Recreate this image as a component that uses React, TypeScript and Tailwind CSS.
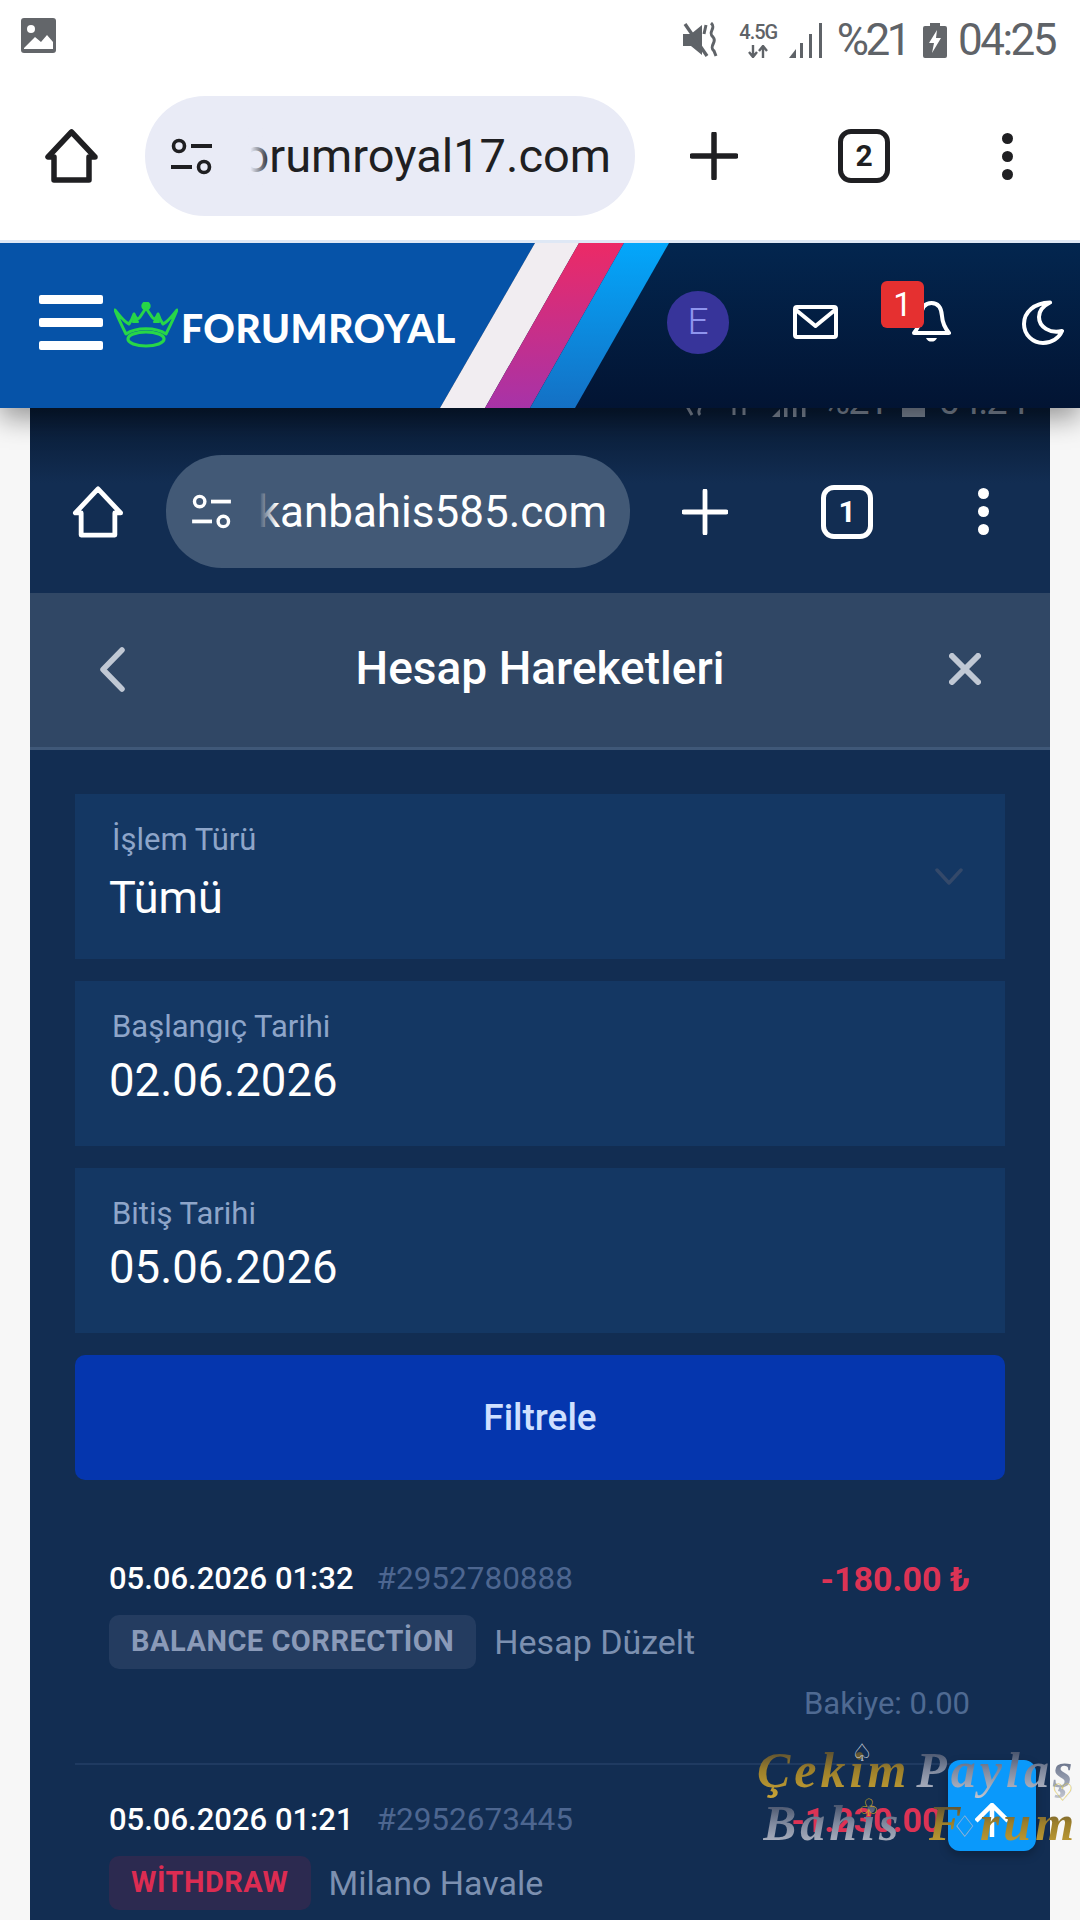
import React from "react";

const Dots = ({ className }: { className: string }) => (
  <div className={`flex flex-col items-center gap-[7px] ${className}`}>
    <div className="h-[11px] w-[11px] rounded-full bg-current" />
    <div className="h-[11px] w-[11px] rounded-full bg-current" />
    <div className="h-[11px] w-[11px] rounded-full bg-current" />
  </div>
);

const HomeIcon = ({ className, sw }: { className: string; sw: number }) => (
  <svg className={className} viewBox="0 0 53 54" fill="none" stroke="currentColor" strokeWidth={sw} strokeLinejoin="round" strokeLinecap="round">
    <path d="M26.5 3 L3 28 H9 V51 H44 V28 H50 Z" />
  </svg>
);

const SlidersIcon = ({ className }: { className: string }) => (
  <svg className={className} viewBox="0 0 43 37" fill="none" stroke="currentColor" strokeWidth={3.6}>
    <circle cx="9" cy="8" r="5.5" />
    <path d="M21 8 H42" strokeWidth={4} />
    <path d="M1 29 H22" strokeWidth={4} />
    <circle cx="34" cy="29" r="5.5" />
  </svg>
);

const PlusIcon = ({ className, sw }: { className: string; sw: number }) => (
  <svg className={className} viewBox="0 0 48 48" fill="none" stroke="currentColor" strokeWidth={sw} strokeLinecap="round">
    <path d="M24 2 V46 M2 24 H46" />
  </svg>
);

const TabCount = ({ n, className }: { n: string; className: string }) => (
  <div className={`flex h-[54px] w-[52px] items-center justify-center rounded-[13px] border-[5px] border-current text-[30px] font-bold leading-none ${className}`}>
    {n}
  </div>
);

const Crown = () => (
  <svg className="h-[46px] w-[64px]" viewBox="0 0 64 46" fill="none" stroke="#27d648" strokeWidth={3} strokeLinecap="round" strokeLinejoin="round">
    <path d="M1 8 C6 14 10 20 15 22 C18 18 19 15 20 12 C22 17 24 18 26 15 L32 6 L38 15 C40 18 42 17 44 12 C45 15 46 18 49 22 C54 20 58 14 63 8 C60 16 56 24 52 32 C42 25 22 25 12 32 C8 24 4 16 1 8 Z" />
    <circle cx="32" cy="4" r="3.2" fill="#27d648" />
    <path d="M21 14 L19 20 L24 20 Z M43 14 L45 20 L40 20 Z" fill="#27d648" strokeWidth={2} />
    <ellipse cx="32" cy="37" rx="18" ry="7" strokeWidth={3.2} />
  </svg>
);

const Field = ({ label, value, size }: { label: string; value: string; size: string }) => (
  <div className="relative h-[165px] bg-[#143763] pl-[34px]">
    <div className="pl-[3px] pt-[28px] text-[31px] leading-[36px] text-[#8ea5c9]">{label}</div>
    <div className={`text-white ${size}`}>{value}</div>
  </div>
);

const Tx = ({ date, id, amount, tag, tagClass, name, balance }: { date: string; id: string; amount: string; tag: string; tagClass: string; name: string; balance?: string }) => (
  <div className="pl-[34px] pr-[35px]">
    <div className="flex h-[40px] items-center justify-between">
      <div className="flex items-center gap-[23px]">
        <span className="text-[31px] font-medium text-white">{date}</span>
        <span className="text-[31.5px] text-[#4d6690]">{id}</span>
      </div>
      <span className="text-[34px] font-bold text-[#dc3355]">{amount}</span>
    </div>
    <div className="mt-[16px] flex items-center gap-[18px]">
      <div className={`flex h-[54px] items-center rounded-[10px] px-[22px] text-[29px] font-bold tracking-[0.5px] ${tagClass}`}>{tag}</div>
      <span className="text-[34px] text-[#7c90b0]">{name}</span>
    </div>
    {balance && <div className="mt-[15px] flex h-[40px] items-center justify-end text-[31px] text-[#4f6a92]">{balance}</div>}
  </div>
);

export default function App() {
  return (
    <div className="relative flex h-[1920px] w-[1080px] flex-col overflow-hidden bg-[#f7f7f7] font-['Roboto',sans-serif]">
      {/* Phone status bar */}
      <div className="relative z-20 flex h-[96px] items-start justify-between bg-white pl-[21px] pr-[25px] pt-[18px] text-[#5f6368]">
        <svg className="h-[35px] w-[35px]" viewBox="0 0 35 35">
          <rect width="35" height="35" rx="3" fill="#63666a" />
          <circle cx="10" cy="11" r="4" fill="#fff" />
          <path d="M3 30 L14 19 L20 24 L26 17 L32 24 V31 H3 Z" fill="#fff" />
        </svg>
        <div className="flex items-center">
          <svg className="h-[36px] w-[38px]" viewBox="0 0 38 36" fill="none" stroke="currentColor">
            <path d="M1 12 H9 L20 3 V33 L9 24 H1 Z" fill="currentColor" stroke="none" />
            <path d="M3 2 L25 34" strokeWidth={3.4} />
            <path d="M24 3 L22 12 M29 1 C35 6 25 10 31 15 C36 20 26 24 32 29 L34 34" strokeWidth={3} />
          </svg>
          <div className="ml-[19px] flex w-[39px] flex-col items-center leading-none">
            <span className="text-[20px] font-medium tracking-[-1px]">4.5G</span>
            <svg className="mt-[3px] h-[13px] w-[22px]" viewBox="0 0 22 13" fill="none" stroke="currentColor" strokeWidth={2.4}>
              <path d="M6 0 V11 M2 7 L6 12 L10 7 M16 13 V2 M12 6 L16 1 L20 6" />
            </svg>
          </div>
          <svg className="ml-[11px] h-[35px] w-[34px]" viewBox="0 0 34 35" fill="currentColor">
            <path d="M0 35 L7 26 V35 Z" />
            <rect x="11" y="20" width="3" height="15" />
            <rect x="20" y="11" width="3" height="24" />
            <rect x="30" y="0" width="3" height="35" />
          </svg>
          <span className="ml-[14px] text-[44px] leading-none tracking-[-3.5px]">%21</span>
          <svg className="ml-[15px] h-[35px] w-[24px]" viewBox="0 0 24 35">
            <path d="M7 0 H17 V3 H22 A2 2 0 0 1 24 5 V33 A2 2 0 0 1 22 35 H2 A2 2 0 0 1 0 33 V5 A2 2 0 0 1 2 3 H7 Z" fill="#63666a" />
            <path d="M14 7 L6 20 H11 L9 30 L18 15 H13 Z" fill="#fff" />
          </svg>
          <span className="ml-[11px] text-[44px] leading-none tracking-[-2.5px]">04:25</span>
        </div>
      </div>

      {/* Browser toolbar */}
      <div className="relative z-20 h-[147px] border-b-[3px] border-[#dfe8f5] bg-white pl-[45px] text-[#1f1f22]">
        <div className="flex h-[120px] items-center">
          <HomeIcon className="h-[54px] w-[53px]" sw={5.5} />
          <div className="ml-[47px] flex h-[120px] w-[490px] items-center rounded-[60px] bg-[#e9ebf6] pl-[25px]">
            <SlidersIcon className="h-[37px] w-[43px] shrink-0" />
            <div className="relative ml-[29px] flex w-[369px] justify-end overflow-hidden">
              <span className="text-[47px] leading-[60px]">forumroyal17.com</span>
              <div className="absolute inset-y-0 left-0 w-[28px] bg-gradient-to-r from-[#e9ebf6] from-30% to-transparent" />
            </div>
          </div>
          <PlusIcon className="ml-[55px] h-[48px] w-[48px]" sw={5.5} />
          <TabCount n="2" className="ml-[100px]" />
          <Dots className="ml-[112px]" />
        </div>
      </div>

      {/* Site header */}
      <div className="relative z-10 flex h-[165px] items-center bg-gradient-to-b from-[#03264f] to-[#021433] pb-[7px] pl-[39px] shadow-[0_10px_26px_rgba(0,0,0,0.4)]">
        <svg className="absolute inset-0 h-[165px] w-[680px]" viewBox="0 0 680 165">
          <defs>
            <linearGradient id="pink" x1="0" y1="0" x2="0" y2="1">
              <stop offset="0" stopColor="#ec2a66" />
              <stop offset="1" stopColor="#a733a8" />
            </linearGradient>
            <linearGradient id="sky" x1="0" y1="0" x2="0" y2="1">
              <stop offset="0" stopColor="#03a7fb" />
              <stop offset="1" stopColor="#1470c4" />
            </linearGradient>
          </defs>
          <polygon points="0,0 535,0 440,165 0,165" fill="#0653a8" />
          <polygon points="535,0 579,0 485,165 440,165" fill="#f1edf1" />
          <polygon points="579,0 624,0 530,165 485,165" fill="url(#pink)" />
          <polygon points="624,0 669,0 575,165 530,165" fill="url(#sky)" />
        </svg>
        <div className="relative flex w-[64px] flex-col gap-[14px]">
          <div className="h-[9px] rounded-[2px] bg-white" />
          <div className="h-[9px] rounded-[2px] bg-white" />
          <div className="h-[9px] rounded-[2px] bg-white" />
        </div>
        <div className="relative ml-[11px] mt-[6px]">
          <Crown />
        </div>
        <span className="relative ml-[3px] mt-[13px] font-['Lato',sans-serif] text-[39px] font-black leading-none tracking-[0.5px] text-white">FORUMROYAL</span>
        <div className="relative ml-[211px] flex h-[63px] w-[62px] items-center justify-center rounded-full bg-[#37349a] text-[37px] font-light text-[#8f94ee]">E</div>
        <svg className="relative ml-[64px] h-[34px] w-[45px]" viewBox="0 0 45 34" fill="none" stroke="#fff" strokeWidth={4} strokeLinejoin="round" strokeLinecap="round">
          <rect x="2" y="2" width="41" height="30" rx="2" />
          <path d="M3 5 L22.5 21 L42 5" />
        </svg>
        <svg className="relative ml-[74px] h-[45px] w-[39px]" viewBox="0 0 39 45" fill="none" stroke="#fff" strokeWidth={4} strokeLinejoin="round">
          <path d="M19.5 3 C27 3 29.5 9 30 16 C30.5 24 33 28 37 33 H2 C6 28 8.5 24 9 16 C9.5 9 12 3 19.5 3 Z" />
          <path d="M14 38 A6 6 0 0 0 25 38 Z" fill="#fff" stroke="none" />
        </svg>
        <svg className="relative ml-[71px] h-[45px] w-[42px]" viewBox="0 0 42 45" fill="none" stroke="#fff" strokeWidth={4} strokeLinejoin="round" strokeLinecap="round">
          <path d="M28 2.5 C12 3 2 12 2 24 C2 35 11 43 21 43 C30 43 37 38 40 31 C28 34 17 27 17 17 C17 11 21 6 28 2.5 Z" />
        </svg>
        {/* Notification count */}
        <div className="absolute left-[881px] top-[38px] flex h-[47px] w-[43px] items-center justify-center rounded-[6px] bg-[#e53030] text-[33px] leading-none text-white">1</div>
      </div>

      {/* Recorded screen inside the page */}
      <div className="mx-[30px] flex-1 overflow-hidden bg-[#122d52] bg-[linear-gradient(to_bottom,#081a33,#122d52_75px)]">
        <div className="flex h-[47px] items-start justify-end overflow-hidden pr-[24px] text-[#7a8494]">
          <div className="mt-[-26px] flex items-center">
            <svg className="h-[32px] w-[30px]" viewBox="0 0 30 32" fill="none" stroke="currentColor" strokeWidth={3}>
              <path d="M2 2 L18 30 M24 2 C28 8 20 12 25 18 C29 22 22 26 26 30" />
            </svg>
            <svg className="ml-[24px] h-[32px] w-[22px]" viewBox="0 0 22 32" fill="none" stroke="currentColor" strokeWidth={3}>
              <path d="M6 14 V30 M16 30 V14" />
            </svg>
            <svg className="ml-[22px] h-[32px] w-[34px]" viewBox="0 0 34 32" fill="currentColor">
              <path d="M0 32 L8 24 V32 Z" />
              <rect x="12" y="0" width="3.5" height="32" />
              <rect x="21" y="0" width="3.5" height="32" />
              <rect x="30" y="0" width="3.5" height="32" />
            </svg>
            <span className="ml-[16px] text-[38px] leading-none tracking-[-2px]">%21</span>
            <div className="ml-[15px] h-[32px] w-[23px] bg-current" />
            <span className="ml-[14px] text-[38px] leading-none tracking-[-1.5px]">04:24</span>
          </div>
        </div>

        <div className="flex h-[138px] items-start pl-[42px] text-white">
          <div className="flex h-[113px] items-center">
            <HomeIcon className="h-[52px] w-[52px]" sw={5} />
            <div className="ml-[42px] flex h-[113px] w-[464px] items-center rounded-[56px] bg-[#425976] pl-[24px]">
              <SlidersIcon className="h-[35px] w-[43px] shrink-0" />
              <div className="relative ml-[22px] flex w-[352px] justify-end overflow-hidden">
                <span className="text-[44px] leading-[56px]">okanbahis585.com</span>
                <div className="absolute inset-y-0 left-0 w-[22px] bg-gradient-to-r from-[#425976] from-20% to-transparent" />
              </div>
            </div>
            <PlusIcon className="ml-[52px] h-[46px] w-[46px]" sw={5} />
            <TabCount n="1" className="ml-[93px]" />
            <Dots className="ml-[105px]" />
          </div>
        </div>

        <div className="relative flex h-[157px] items-center justify-center border-b-[3px] border-[#3f5878] bg-[#304765] pb-[4px]">
          <svg className="absolute left-[70px] top-[54px] h-[45px] w-[25px]" viewBox="0 0 25 45" fill="none" stroke="#c0c8d4" strokeWidth={5.5} strokeLinecap="round" strokeLinejoin="round">
            <path d="M22 3 L3 22.5 L22 42" />
          </svg>
          <span className="text-[46px] font-medium text-white">Hesap Hareketleri</span>
          <svg className="absolute left-[919px] top-[60px] h-[32px] w-[32px]" viewBox="0 0 32 32" fill="none" stroke="#c0c8d4" strokeWidth={6} strokeLinecap="round">
            <path d="M3 3 L29 29 M29 3 L3 29" />
          </svg>
        </div>

        <div className="flex flex-col gap-[22px] px-[45px] pt-[44px]">
          <div className="relative">
            <Field label="İşlem Türü" value="Tümü" size="mt-[14px] text-[45px] leading-[52px]" />
            <svg className="absolute right-[41px] top-[74px] h-[18px] w-[30px]" viewBox="0 0 30 18" fill="none" stroke="#34496a" strokeWidth={3.5} strokeLinecap="round" strokeLinejoin="round">
              <path d="M3 2 L15 15 L27 2" />
            </svg>
          </div>
          <Field label="Başlangıç Tarihi" value="02.06.2026" size="mt-[10px] text-[45.5px] leading-[52px]" />
          <Field label="Bitiş Tarihi" value="05.06.2026" size="mt-[10px] text-[45.5px] leading-[52px]" />
          <button className="flex h-[125px] items-center justify-center rounded-[10px] bg-[#0536ae] text-[37px] font-medium text-[#cfe0ff]">Filtrele</button>
        </div>

        <div className="mx-[45px] mt-[79px]">
          <Tx date="05.06.2026 01:32" id="#2952780888" amount="-180.00 ₺" tag="BALANCE CORRECTİON" tagClass="bg-[#243c60] text-[#8a9ab8]" name="Hesap Düzelt" balance="Bakiye: 0.00" />
          <div className="mb-[35px] mt-[39px] h-[2px] bg-[#1f3a61]" />
          <Tx date="05.06.2026 01:21" id="#2952673445" amount="-1.230.00 ₺" tag="WİTHDRAW" tagClass="bg-[#2c2a50] text-[#dc2c52]" name="Milano Havale" />
        </div>
      </div>

      {/* Scroll to top */}
      <div className="absolute left-[948px] top-[1760px] flex h-[91px] w-[88px] items-end justify-center rounded-[12px] bg-[#0a99fb] pb-[14px] shadow-[0_4px_10px_rgba(0,0,0,0.25)]">
        <svg className="h-[34px] w-[34px]" viewBox="0 0 34 34" fill="none" stroke="#fff" strokeWidth={4.5}>
          <path d="M1 18 L17 2 L33 18 M17 2 V34" />
        </svg>
      </div>

      {/* Watermark over the recording */}
      <div className="absolute left-[757px] top-[1745px] whitespace-nowrap font-['Liberation_Serif',serif] text-[50px] font-bold italic leading-none tracking-[4px]">
        <span className="bg-gradient-to-b from-[#3d3a2e] via-[#9c7f2a] to-[#c9a436] bg-clip-text text-transparent">Çekim</span>
        <span className="ml-[6px] bg-gradient-to-b from-[#2f3c55] via-[#7f889d] to-[#c0c4cf] bg-clip-text text-transparent">Paylaş</span>
      </div>
      <div className="absolute left-[763px] top-[1798px] whitespace-nowrap font-['Liberation_Serif',serif] text-[50px] font-bold italic leading-none tracking-[4px]">
        <span className="bg-gradient-to-b from-[#2f3c55] via-[#7f889d] to-[#c0c4cf] bg-clip-text text-transparent">Bahis</span>
        <span className="ml-[26px] bg-gradient-to-b from-[#3d3a2e] via-[#9c7f2a] to-[#c9a436] bg-clip-text text-transparent">F</span>
        <span className="ml-[14px] bg-gradient-to-b from-[#3d3a2e] via-[#9c7f2a] to-[#c9a436] bg-clip-text text-transparent">rum</span>
      </div>
      <span className="absolute left-[851px] top-[1741px] font-['DejaVu_Sans',sans-serif] text-[24px] leading-none text-[#c7ced8]">♤</span>
      <span className="absolute left-[1052px] top-[1781px] font-['DejaVu_Sans',sans-serif] text-[24px] leading-none text-[#d6c34a]">♡</span>
      <span className="absolute left-[858px] top-[1796px] font-['DejaVu_Sans',sans-serif] text-[24px] leading-none text-[#d1a91e]">♧</span>
      <span className="absolute left-[951px] top-[1812px] font-['DejaVu_Sans',sans-serif] text-[30px] leading-none text-[#9db4cc]">♢</span>
    </div>
  );
}
